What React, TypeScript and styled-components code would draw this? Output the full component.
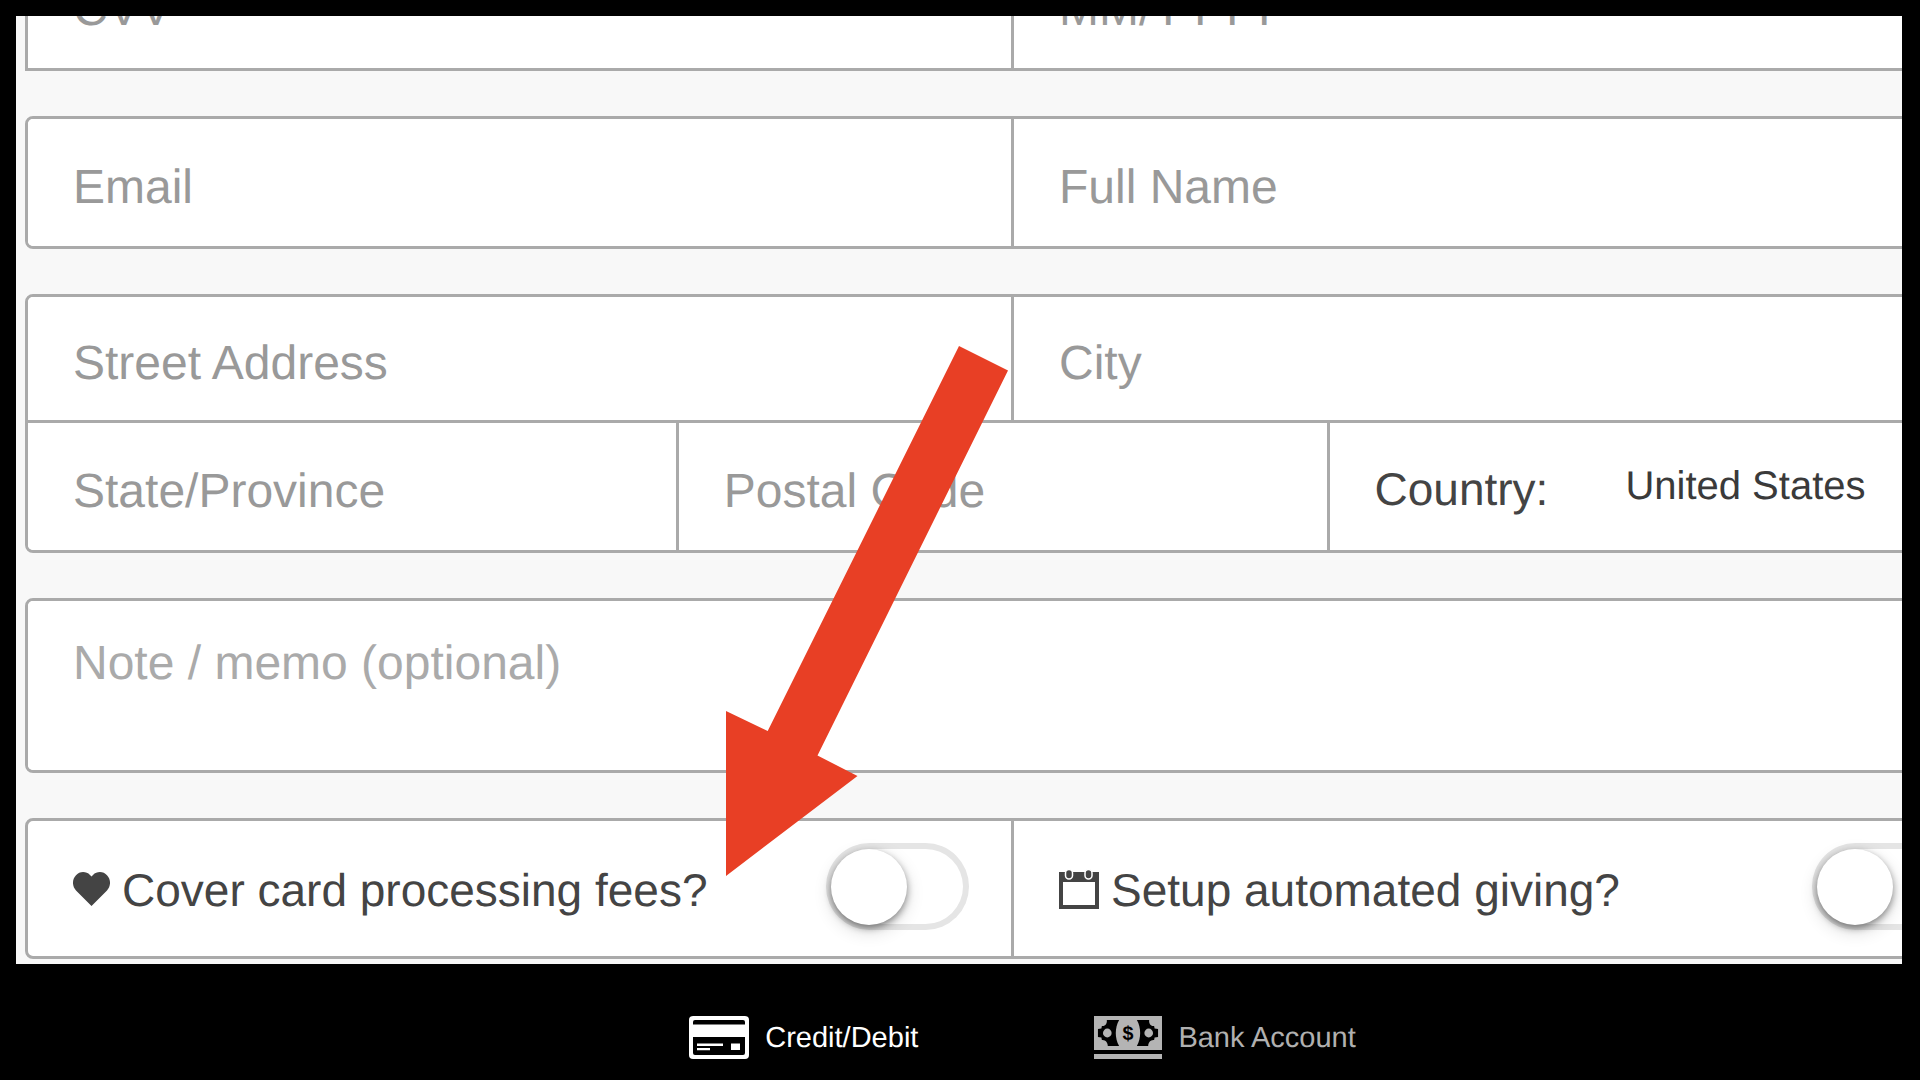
import React from "react";
import styled, { createGlobalStyle } from "styled-components";

const GlobalStyle = createGlobalStyle`
  *, *::before, *::after { box-sizing: border-box; }
  body {
    margin: 0;
    background: #000;
    font-family: "Liberation Sans", Arial, sans-serif;
    text-rendering: geometricPrecision;
    color: #444;
  }
  button, input, select, textarea { font-family: inherit; text-rendering: inherit; }
`;

const line = "3px solid #aaa";

const Page = styled.div`
  position: relative;
  display: flex;
  flex-direction: column;
  min-height: 100vh;
  overflow: hidden;
  padding: 16px 18px 0 16px;
`;

const Panel = styled.main`
  overflow: hidden;
  background: #f8f8f8;
  padding: 0 0 5px 9px;
`;

const Form = styled.form`
  display: flex;
  flex-direction: column;
  gap: 45px;
  margin: -75px -101px 0 0;
`;

const Group = styled.section<{ $continued?: boolean }>`
  background: #fff;
  border: ${line};
  border-radius: ${(p) => (p.$continued ? "0" : "8px")};
  ${(p) => p.$continued && "border-top: 0;"}
  overflow: hidden;
`;

const Row = styled.div<{ $columns: string; $height: number }>`
  display: grid;
  grid-template-columns: ${(p) => p.$columns};
  height: ${(p) => p.$height}px;

  & + & {
    border-top: ${line};
    box-sizing: content-box;
  }
  & > * + * {
    box-shadow: -3px 0 0 #aaa;
  }
`;

const Field = styled.input`
  width: 100%;
  min-width: 0;
  border: 0;
  border-radius: 0;
  outline: 0;
  background: #fff;
  color: #444;
  font-size: 48px;
  padding: 10px 45px 0;
  &::placeholder { color: #999; opacity: 1; }
`;

const Memo = styled.textarea`
  display: block;
  width: 100%;
  height: 169px;
  border: 0;
  outline: 0;
  resize: none;
  background: #fff;
  color: #444;
  font-size: 48px;
  line-height: 56px;
  padding: 35px 45px;
  &::placeholder { color: #aaa; opacity: 1; }
`;

const Cell = styled.div`
  display: flex;
  align-items: center;
  min-width: 0;
  padding: 0 45px;
`;

const CountryLabel = styled.label`
  font-size: 46px;
  padding-top: 5px;
  margin-right: 77px;
`;

const Select = styled.select`
  appearance: none;
  flex: 1;
  min-width: 0;
  border: 0;
  outline: 0;
  padding: 0 0 2px;
  background: transparent;
  color: #3a3a3a;
  font-size: 40px;
`;

const OptionLabel = styled.label`
  flex: 1;
  display: flex;
  align-items: center;
  gap: 12px;
  font-size: 46px;
  white-space: nowrap;
`;

const Caption = styled.span`
  padding-top: 2px;
`;

const Toggle = styled.input`
  appearance: none;
  flex: none;
  display: flex;
  width: 143px;
  height: 87px;
  margin: 0 0 4px;
  padding: 6px 5px;
  border-radius: 44px;
  background: #fff;
  box-shadow: inset 0 0 0 6px #e5e5e5;
  &::before {
    content: "";
    width: 76px;
    height: 76px;
    border-radius: 50%;
    background: #fff;
    box-shadow: 0 3px 7px rgba(0, 0, 0, 0.42), 0 6px 18px rgba(0, 0, 0, 0.16);
  }
  &:checked { justify-content: flex-end; background: #4cd964; }
`;

const Tabs = styled.nav`
  display: flex;
  justify-content: center;
  gap: 176px;
  padding: 52px 0 20px 127px;
`;

const Tab = styled.button<{ $active?: boolean }>`
  display: flex;
  align-items: center;
  gap: 16px;
  border: 0;
  padding: 0;
  background: none;
  color: ${(p) => (p.$active ? "#fff" : "#b0b0b0")};
  font-size: 29px;
  cursor: pointer;
`;

const Arrow = styled.svg`
  position: absolute;
  left: 726px;
  top: 346px;
  pointer-events: none;
`;

const HeartIcon = () => (
  <svg width="37" height="34" viewBox="0 0 37 34" fill="#444" aria-hidden="true">
    <path d="M18.5 34 3 18.500C-1 14.200-1 7.600 2.800 3.500 6.500-.9 13-1 17 2.900L18.500 4.400 20 2.900C24-1 30.500-.9 34.200 3.500 38 7.600 38 14.200 34 18.500Z" />
  </svg>
);

const CalendarIcon = () => (
  <svg width="40" height="40" viewBox="0 0 40 40" aria-hidden="true">
    <path fill="#444" fillRule="evenodd" d="M0 3H40V40H0ZM4 13V36H36V13Z" />
    <g fill="#444" stroke="#fff" strokeWidth="1.500">
      <rect x="6.500" y="0.500" width="7" height="9.500" rx="3.500" />
      <rect x="26" y="0.500" width="7" height="9.500" rx="3.500" />
    </g>
  </svg>
);

const CardIcon = () => (
  <svg width="60" height="43" viewBox="0 0 60 43" aria-hidden="true">
    <rect width="60" height="43" rx="4" fill="#fff" />
    <path fill="#000" d="M4 8.500V6Q4 4 6 4H54Q56 4 56 6V8.500ZM4 21H56V37Q56 39 54 39H6Q4 39 4 37Z" />
    <path fill="#fff" d="M8 27.500H34V30H8ZM8 32H21V34.300H8ZM42 27.500H51V34H42Z" />
  </svg>
);

const CashIcon = () => (
  <svg width="68" height="43" viewBox="0 0 69 43" preserveAspectRatio="none" aria-hidden="true">
    <path fill="#b4b4b4" d="M0 0H69V34H0ZM0 38H69V43H0Z" />
    <g fill="#000">
      <path d="M13 4H25.500C21 12 21 22 25.500 30H14C14 26.500 11.500 23.500 8 24L7.500 21.500 4 21V13L7.500 12.500 8 10C11.500 10.500 13.500 7.500 13 4Z" />
      <path d="M56 4H43.500C48 12 48 22 43.500 30H55C55 26.500 57.500 23.500 61 24L61.500 21.500 65 21V13L61.500 12.500 61 10C57.500 10.500 55.500 7.500 56 4Z" />
    </g>
    <circle cx="13.500" cy="17" r="4.400" fill="#b4b4b4" />
    <circle cx="55.500" cy="17" r="4.400" fill="#b4b4b4" />
    <text x="34.500" y="24" textAnchor="middle" fontSize="20" fontWeight="700" fill="#000">$</text>
  </svg>
);

export default function App() {
  return (
    <Page>
      <GlobalStyle />
      <Panel>
        <Form onSubmit={(e) => e.preventDefault()}>
          <Group $continued>
            <Row $columns="1fr 1fr" $height={127}>
              <Field aria-label="CVV" placeholder="CVV" />
              <Field aria-label="Expiration date" placeholder="MM/YYYY" />
            </Row>
          </Group>
          <Group>
            <Row $columns="1fr 1fr" $height={127}>
              <Field type="email" aria-label="Email" placeholder="Email" />
              <Field aria-label="Full Name" placeholder="Full Name" />
            </Row>
          </Group>
          <Group>
            <Row $columns="1fr 1fr" $height={123}>
              <Field aria-label="Street Address" placeholder="Street Address" />
              <Field aria-label="City" placeholder="City" />
            </Row>
            <Row $columns="33fr 33fr 34fr" $height={127}>
              <Field aria-label="State/Province" placeholder="State/Province" />
              <Field aria-label="Postal Code" placeholder="Postal Code" />
              <Cell>
                <CountryLabel htmlFor="country">Country:</CountryLabel>
                <Select id="country" defaultValue="US">
                  <option value="US">United States</option>
                </Select>
              </Cell>
            </Row>
          </Group>
          <Group>
            <Memo aria-label="Note / memo (optional)" placeholder="Note / memo (optional)" />
          </Group>
          <Group>
            <Row $columns="1fr 1fr" $height={135}>
              <Cell>
                <OptionLabel htmlFor="cover-fees">
                  <HeartIcon />
                  <Caption>Cover card processing fees?</Caption>
                </OptionLabel>
                <Toggle id="cover-fees" type="checkbox" />
              </Cell>
              <Cell>
                <OptionLabel htmlFor="automated">
                  <CalendarIcon />
                  <Caption>Setup automated giving?</Caption>
                </OptionLabel>
                <Toggle id="automated" type="checkbox" />
              </Cell>
            </Row>
          </Group>
        </Form>
      </Panel>
      <Tabs aria-label="Payment method">
        <Tab type="button" $active>
          <CardIcon />
          <Caption>Credit/Debit</Caption>
        </Tab>
        <Tab type="button">
          <CashIcon />
          <Caption>Bank Account</Caption>
        </Tab>
      </Tabs>
      <Arrow width="282" height="530" viewBox="0 0 282 530" aria-hidden="true">
        <path fill="#e83f25" d="M233 0 282 24.500 91.500 409.500 131.500 430 0 530V365L41.700 385Z" />
      </Arrow>
    </Page>
  );
}
